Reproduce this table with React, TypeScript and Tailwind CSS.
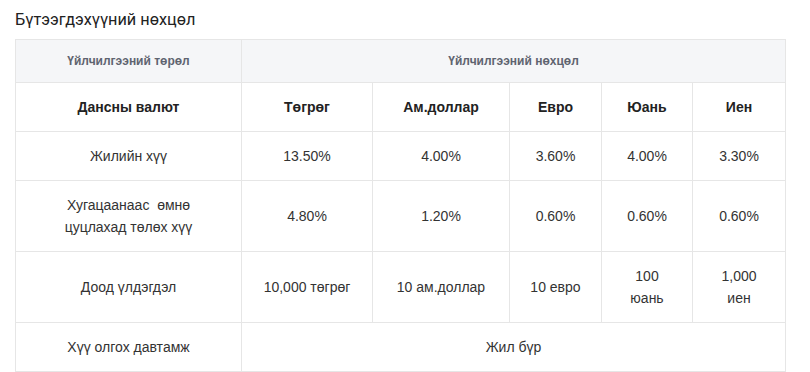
import React from "react";

const cols = [226, 131, 137, 92, 91, 93];

export default function App() {
  const td = "border border-[#e6e6e6] text-center align-middle px-2";
  return (
    <div className="w-[810px] h-[372px] bg-white overflow-hidden" style={{ fontFamily: '"Liberation Sans", Arial, sans-serif' }}>
      <div className="pl-[15px] pt-[10px]">
        <h2 className="text-[16.3px] leading-[20px] text-[#222] font-normal" style={{ fontFamily: 'Roboto, "Liberation Sans", sans-serif' }}>
          Бүтээгдэхүүний нөхцөл
        </h2>
        <table className="mt-[9px] border-collapse table-fixed w-[770px] text-[14px] text-[#333]">
          <colgroup>
            {cols.map((w, i) => (
              <col key={i} style={{ width: w }} />
            ))}
          </colgroup>
          <tbody>
            <tr className="h-[43px] bg-[#f5f6f8]">
              <td className={`${td} text-[12px] font-bold text-[#5f6470]`}>Үйлчилгээний төрөл</td>
              <td colSpan={5} className={`${td} text-[12px] font-bold text-[#5f6470]`}>Үйлчилгээний нөхцөл</td>
            </tr>
            <tr className="h-[49px] font-bold text-[#222]">
              <td className={td}>Дансны валют</td>
              <td className={td}>Төгрөг</td>
              <td className={td}>Ам.доллар</td>
              <td className={td}>Евро</td>
              <td className={td}>Юань</td>
              <td className={td}>Иен</td>
            </tr>
            <tr className="h-[49px]">
              <td className={td}>Жилийн хүү</td>
              <td className={td}>13.50%</td>
              <td className={td}>4.00%</td>
              <td className={td}>3.60%</td>
              <td className={td}>4.00%</td>
              <td className={td}>3.30%</td>
            </tr>
            <tr className="h-[71px] leading-[22px]">
              <td className={td}>
                Хугацаанаас{"\u00a0"} өмнө
                <br />
                цуцлахад төлөх хүү
              </td>
              <td className={td}>4.80%</td>
              <td className={td}>1.20%</td>
              <td className={td}>0.60%</td>
              <td className={td}>0.60%</td>
              <td className={td}>0.60%</td>
            </tr>
            <tr className="h-[71px] leading-[22px]">
              <td className={td}>Доод үлдэгдэл</td>
              <td className={td}>10,000 төгрөг</td>
              <td className={td}>10 ам.доллар</td>
              <td className={td}>10 евро</td>
              <td className={td}>
                100
                <br />
                юань
              </td>
              <td className={td}>
                1,000
                <br />
                иен
              </td>
            </tr>
            <tr className="h-[49px]">
              <td className={td}>Хүү олгох давтамж</td>
              <td colSpan={5} className={td}>Жил бүр</td>
            </tr>
          </tbody>
        </table>
      </div>
    </div>
  );
}
